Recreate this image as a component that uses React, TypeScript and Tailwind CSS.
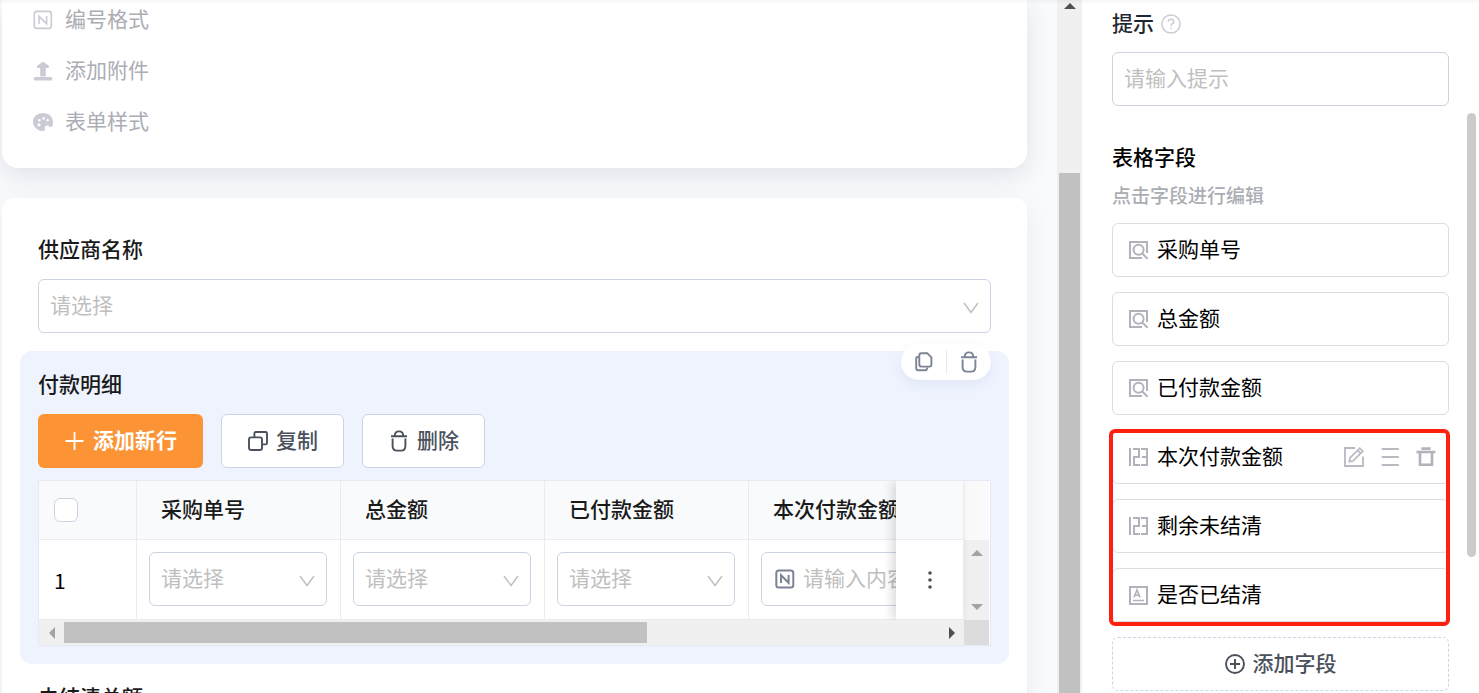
import type { ReactNode } from "react";
import clsx from "clsx";

type FieldKind = "relation" | "number" | "text";

type TableField = {
  name: string;
  kind: FieldKind;
  active?: boolean;
};

const linkedFields: TableField[] = [
  { name: "采购单号", kind: "relation" },
  { name: "总金额", kind: "relation" },
  { name: "已付款金额", kind: "relation" },
];

const highlightedFields: TableField[] = [
  { name: "本次付款金额", kind: "number", active: true },
  { name: "剩余未结清", kind: "number" },
  { name: "是否已结清", kind: "text" },
];

interface IconProps {
  className?: string;
}

/* --- Icons --- */

const NumberBoxIcon = ({ className }: IconProps) => (
  <svg viewBox="0 0 20 20" fill="none" stroke="currentColor" strokeWidth="1.6" className={clsx("size-5 shrink-0", className)}>
    <rect x="1.3" y="1.4" width="17" height="17" rx="2.5" />
    <path d="M6 14V6.2L13.6 13.8V6" />
  </svg>
);

const UploadIcon = () => (
  <svg viewBox="0 0 20 20" fill="currentColor" className="size-5 shrink-0">
    <path d="M9.4 .9Q10 .5 10.6 .9L15.8 4.8Q16.6 5.6 15.8 6.6 15.4 7 14.8 7H12.8V14.4Q12.8 15.4 11.8 15.4H8.2Q7.2 15.4 7.2 14.4V7H5.2Q4.6 7 4.2 6.6 3.4 5.6 4.2 4.8Z" />
    <rect x=".6" y="16" width="18.8" height="3.6" rx="1.6" />
  </svg>
);

const PaletteIcon = () => (
  <svg viewBox="0 0 20 20" fill="currentColor" fillRule="evenodd" className="size-5 shrink-0">
    <path d="M10 1C4.4 1 0 4.8 0 9.8S4.4 19 9.6 19C11.4 19 12.2 17.8 11.9 16.4 11.5 14.6 12.6 13.4 14.2 13.5 16.4 13.8 16.7 15.2 18.2 15.1 19.4 15 20 12.4 20 10.2 20 4.8 15.6 1 10 1ZM5.1 8.2A1.3 1.3 0 1 0 7.7 8.2 1.3 1.3 0 1 0 5.1 8.2ZM9.3 6.4A1.3 1.3 0 1 0 11.9 6.4 1.3 1.3 0 1 0 9.3 6.4ZM13.3 8.2A1.3 1.3 0 1 0 15.9 8.2 1.3 1.3 0 1 0 13.3 8.2ZM4.4 12.8A1.6 1.6 0 1 0 7.6 12.8 1.6 1.6 0 1 0 4.4 12.8Z" />
  </svg>
);

const ChevronIcon = ({ className }: IconProps) => (
  <svg viewBox="0 0 16 12" fill="none" stroke="currentColor" strokeWidth="1.4" className={clsx("h-3 w-4", className)}>
    <path d="M1 1 8 10.5 15 1" />
  </svg>
);

const PlusIcon = () => (
  <svg viewBox="0 0 20 20" fill="none" stroke="currentColor" strokeWidth="1.8" className="size-5">
    <path d="M10.5 1V19M1.5 10H19.5" />
  </svg>
);

const CopyIcon = () => (
  <svg viewBox="0 0 20 20" fill="none" stroke="currentColor" strokeWidth="1.9" className="size-5">
    <rect x="1" y="6.4" width="13" height="12.6" rx="2" />
    <path d="M6.4 6V2.5Q6.4 1 7.9 1H17.4Q19 1 19 2.5V12Q19 13.4 17.5 13.4H14.4" />
  </svg>
);

const PagesIcon = () => (
  <svg viewBox="0 0 20 20" fill="none" stroke="currentColor" strokeWidth="1.9" className="size-5">
    <path d="M7.3 1.2H13.2L17.4 5.4V12.6Q17.4 14.6 15.4 14.6H7.3Q5.3 14.6 5.3 12.6V3.2Q5.3 1.2 7.3 1.2Z" />
    <path d="M4.6 5H3.6Q2.2 5 2.2 6.4V16.3Q2.2 18.3 4.2 18.3H11.5Q13 18.3 13.5 15.4" />
  </svg>
);

const BinIcon = ({ className }: IconProps) => (
  <svg viewBox="0 0 20 22" fill="none" stroke="currentColor" strokeWidth="1.9" className={clsx("h-[22px] w-5", className)}>
    <path d="M2 6.2H18M5.8 5.6Q6 1.4 10 1.4T14.2 5.6M3.6 8.4V16Q3.6 20.6 8 20.6H12Q16.4 20.6 16.4 16V8.4" />
  </svg>
);

const HelpIcon = () => (
  <svg viewBox="0 0 20 20" fill="none" stroke="currentColor" strokeWidth="1.5" className="size-5">
    <circle cx="10" cy="10" r="9.1" />
    <path d="M7.2 7.8Q7.2 5.2 10 5.2T12.8 7.8Q12.8 9.2 11.2 9.8 10 10.3 10 12M10 13.4V15" />
  </svg>
);

const FieldIcon = ({ kind }: { kind: FieldKind }) => (
  <svg viewBox="0 0 20 20" fill="none" stroke="currentColor" strokeWidth="2" className="size-5 shrink-0 text-[#b2b2bd]">
    {kind === "relation" && (
      <>
        <path d="M13 18H1V2H18V13" />
        <circle cx="9.6" cy="9.8" r="5" />
        <path d="M12.8 13 18.6 18.8" />
      </>
    )}
    {kind === "number" && (
      <path d="M1 1V19M4 2H10V10H5V18H11M12 2H18V18H12M13 10H18" />
    )}
    {kind === "text" && (
      <>
        <rect x="1" y="2" width="17" height="17" strokeWidth="2" />
        <path d="M5 12.4 8 5 11 12.4M6 10.2H10M4 15.5H15" strokeWidth="1.6" />
      </>
    )}
  </svg>
);

const EditIcon = () => (
  <svg viewBox="0 0 20 20" fill="none" stroke="currentColor" strokeWidth="1.8" className="size-5">
    <path d="M11 1H1V19H19V9.6" />
    <path d="M5.4 14.6 6 11 15.8 1.2 18.8 4.2 9 14ZM13.6 3.4 16.6 6.4" strokeWidth="1.7" />
  </svg>
);

const MenuIcon = () => (
  <svg viewBox="0 0 20 20" fill="none" stroke="currentColor" strokeWidth="2.2" strokeLinecap="round" className="size-5">
    <path d="M2.5 2H18M2.5 10H18M2.5 18H18" />
  </svg>
);

const TrashIcon = () => (
  <svg viewBox="0 0 20 20" fill="none" stroke="currentColor" strokeWidth="2.6" className="size-5">
    <path d="M.5 5H19.5M5.4 1.6H14.6M4 5V17.8H16V5" />
  </svg>
);

const CirclePlusIcon = () => (
  <svg viewBox="0 0 20 20" fill="none" stroke="currentColor" strokeWidth="1.9" className="size-5">
    <circle cx="10" cy="10" r="9" />
    <path d="M10 5V15M5 10H15" />
  </svg>
);

/* --- Form parts --- */

const SelectBox = ({ id, label }: { id: string; label?: string }) => (
  <div className="relative">
    <select
      id={id}
      aria-label={label}
      defaultValue=""
      className="block h-[54px] w-full appearance-none rounded-md border border-[#ccd3e2] bg-white pr-10 pl-[11px] text-[#bfbfbf]"
    >
      <option value="">请选择</option>
    </select>
    <ChevronIcon className="pointer-events-none absolute top-[23px] right-3 text-[#bfbfbf]" />
  </div>
);

const ShortcutRow = ({ icon, children }: { icon: ReactNode; children: ReactNode }) => (
  <button type="button" className="flex h-[31px] items-center gap-3 text-[#aaadb3]">
    <span className="text-[#cbcbd6]">{icon}</span>
    {children}
  </button>
);

const FieldItem = ({ field }: { field: TableField }) => (
  <li className="flex h-[54px] items-center gap-2 rounded-md border border-[#dcdce4] bg-white pr-3 pl-4">
    <FieldIcon kind={field.kind} />
    <span className="flex-1 text-black">{field.name}</span>
    {field.active && (
      <span className="flex items-center gap-4 text-[#b9b9c4]">
        <button type="button" aria-label="编辑"><EditIcon /></button>
        <button type="button" aria-label="排序"><MenuIcon /></button>
        <button type="button" aria-label="删除字段" className="text-[#b2b2bd]"><TrashIcon /></button>
      </span>
    )}
  </li>
);

const DetailTable = () => {
  const selectColumns = linkedFields.map((field) => field.name);

  return (
    <div className="border border-[#e6e9f1] bg-white pr-px">
      <div className="flex overflow-hidden">
        <div className="min-w-0 flex-1 overflow-hidden">
          <table className="w-[914px] table-fixed border-separate border-spacing-0">
            <thead>
              <tr className="h-[59px] bg-[#f9fafc] text-left text-[#1a1a1a]">
                <th className="w-[98px] border-r border-b border-[#e9ebf1] pl-[15px]">
                  <input
                    type="checkbox"
                    aria-label="全选"
                    className="block size-6 appearance-none rounded-md border border-[#ccd3e2] bg-white"
                  />
                </th>
                {selectColumns.map((name) => (
                  <th key={name} className="w-[204px] border-r border-b border-[#e9ebf1] pl-6 font-medium">{name}</th>
                ))}
                <th className="w-[204px] border-b border-[#e9ebf1] pl-6 font-medium">本次付款金额</th>
              </tr>
            </thead>
            <tbody>
              <tr className="h-20 align-top">
                <td className="border-r border-b border-[#e9ebf1] pl-[15px] align-middle font-['Noto_Sans_CJK_SC',sans-serif] text-black">1</td>
                {selectColumns.map((name, i) => (
                  <td key={name} className="border-r border-b border-[#e9ebf1] pt-3 pr-[13px] pl-3">
                    <SelectBox id={`cell-${i}`} label={name} />
                  </td>
                ))}
                <td className="border-b border-[#e9ebf1] px-3 pt-3">
                  <label className="flex h-[54px] items-center gap-2 rounded-md border border-[#ccd3e2] pl-[13px] text-[#7b8494]">
                    <NumberBoxIcon className="stroke-2" />
                    <input
                      type="text"
                      aria-label="本次付款金额"
                      placeholder="请输入内容"
                      className="w-full min-w-0 placeholder:text-[#bfbfbf]"
                    />
                  </label>
                </td>
              </tr>
            </tbody>
          </table>
        </div>

        {/* Pinned action column */}
        <div className="z-10 w-[68px] shrink-0 border-r border-[#e9ebf1] bg-white shadow-[-4px_0_10px_rgba(0,0,0,0.14)]">
          <div className="h-[59px] border-b border-[#e9ebf1] bg-[#f9fafc]" />
          <div className="flex h-20 items-center justify-center border-b border-[#e9ebf1]">
            <button type="button" aria-label="更多" className="text-[#4a515c]">
              <svg viewBox="0 0 6 20" fill="currentColor" className="h-5 w-1.5">
                <circle cx="3" cy="3" r="1.8" />
                <circle cx="3" cy="10" r="1.8" />
                <circle cx="3" cy="17" r="1.8" />
              </svg>
            </button>
          </div>
        </div>

        <div className="flex w-[25px] shrink-0 flex-col">
          <div className="h-[59px] bg-[#fafafa]" />
          <div className="flex flex-1 flex-col items-center justify-between bg-[#f0f0f0] py-2.5 text-[#a3a3a3]">
            <svg viewBox="0 0 12 6" fill="currentColor" className="h-1.5 w-3"><path d="M0 6 6 0 12 6Z" /></svg>
            <svg viewBox="0 0 12 6" fill="currentColor" className="h-1.5 w-3"><path d="M0 0H12L6 6Z" /></svg>
          </div>
        </div>
      </div>

      {/* Horizontal scrollbar */}
      <div className="flex h-[25px] bg-[#f0f0f0]">
        <div className="flex w-[25px] items-center justify-center text-[#a3a3a3]">
          <svg viewBox="0 0 6 12" fill="currentColor" className="h-3 w-1.5"><path d="M6 0V12L0 6Z" /></svg>
        </div>
        <div className="flex flex-1 items-center">
          <div className="h-[21px] w-2/3 bg-[#c1c1c1]" />
        </div>
        <div className="flex w-[25px] items-center justify-center text-[#505050]">
          <svg viewBox="0 0 6 12" fill="currentColor" className="h-3 w-1.5"><path d="M0 0V12L6 6Z" /></svg>
        </div>
        <div className="w-[25px] bg-[#dcdcdc]" />
      </div>
    </div>
  );
};

const App = () => {
  const outlineButton =
    "flex h-[54px] items-center gap-2 rounded-md border border-[#ccd3e2] bg-white pr-[25px] pl-[26px] font-medium text-[#4a515c]";

  return (
    <div className="relative flex h-screen overflow-hidden bg-white font-['Liberation_Sans','Noto_Sans_CJK_SC',sans-serif] text-[21px] leading-8">
      <main className="min-w-0 flex-1 overflow-hidden bg-[#f9fafc] pr-[30px] pl-0.5">
        <section className="flex flex-col items-start gap-5 rounded-b-2xl bg-white px-[31px] pt-1 pb-[31px] shadow-[0_8px_24px_rgba(60,60,110,0.12)]">
          <ShortcutRow icon={<NumberBoxIcon />}>编号格式</ShortcutRow>
          <ShortcutRow icon={<UploadIcon />}>添加附件</ShortcutRow>
          <ShortcutRow icon={<PaletteIcon />}>表单样式</ShortcutRow>
        </section>

        <section className="mt-[30px] rounded-xl bg-white p-[18px] text-[#1a1a1a] shadow-[0_8px_24px_rgba(60,60,110,0.08)]">
          <div className="p-[18px]">
            <label htmlFor="supplier" className="mb-[13px] block font-medium">供应商名称</label>
            <SelectBox id="supplier" />
          </div>

          <div className="relative rounded-xl bg-[#eef3fe] p-[18px]">
            {/* Floating block actions */}
            <div className="absolute -top-[7px] right-[18px] flex h-9 w-[90px] items-center justify-center gap-3 rounded-full bg-white text-[#7b8494] shadow-[0_4px_12px_rgba(60,80,150,0.08)]">
              <button type="button" aria-label="复制字段"><PagesIcon /></button>
              <span className="h-6 w-px bg-[#e6e9f1]" />
              <button type="button" aria-label="删除字段"><BinIcon /></button>
            </div>

            <h2 className="mb-[13px] font-medium">付款明细</h2>
            <div className="mb-3 flex gap-[18px]">
              <button type="button" className="flex h-[54px] items-center gap-[9px] rounded-md bg-[#fc9436] px-[26px] font-bold text-white">
                <PlusIcon />
                添加新行
              </button>
              <button type="button" className={outlineButton}>
                <CopyIcon />
                复制
              </button>
              <button type="button" className={outlineButton}>
                <BinIcon />
                删除
              </button>
            </div>
            <DetailTable />
          </div>

          <div className="p-[18px]">
            <label htmlFor="unsettled" className="mb-[13px] block font-medium">未结清总额</label>
            <SelectBox id="unsettled" />
          </div>
        </section>
      </main>

      {/* Page scrollbar */}
      <div className="flex w-[25px] shrink-0 flex-col items-center bg-[#f0f0f0] text-[#505050]">
        <svg viewBox="0 0 12 6" fill="currentColor" className="mt-[3px] h-1.5 w-3 shrink-0"><path d="M0 6 6 0 12 6Z" /></svg>
        <div className="mt-[164px] w-[21px] flex-1 bg-[#c1c1c1]" />
      </div>

      <aside className="flex w-[397px] shrink-0 bg-white pr-[3px] pl-[30px]">
        <div className="min-w-0 flex-1 pt-2">
          <div className="mb-3 flex items-center gap-[7px]">
            <label htmlFor="hint" className="font-medium text-[#1f2933]">提示</label>
            <span className="text-[#cbcbd6]"><HelpIcon /></span>
          </div>
          <input
            id="hint"
            type="text"
            placeholder="请输入提示"
            className="block h-[54px] w-full rounded-md border border-[#ccd3e2] px-[11px] placeholder:text-[#bfbfbf]"
          />

          <h2 className="mt-9 font-medium text-black">表格字段</h2>
          <p className="mt-[7px] mb-2.5 text-[19px] leading-8 font-medium text-[#aaadb3]">点击字段进行编辑</p>

          <ul className="flex flex-col gap-[15px]">
            {linkedFields.map((field) => <FieldItem key={field.name} field={field} />)}
          </ul>
          <div className="relative my-[15px]">
            <ul className="flex flex-col gap-[15px]">
              {highlightedFields.map((field) => <FieldItem key={field.name} field={field} />)}
            </ul>
            <div className="pointer-events-none absolute -top-px -right-px -bottom-1 -left-[3px] rounded-md border-4 border-[#ff2010]" />
          </div>

          <button
            type="button"
            className="flex h-[54px] w-full items-center justify-center gap-2 rounded-md border border-dashed border-[#ccd3e2] font-medium text-[#4a515c]"
          >
            <CirclePlusIcon />
            添加字段
          </button>
        </div>

        <div className="mt-[113px] ml-[18px] h-[444px] w-[9px] shrink-0 rounded-full bg-[#cbcbcb]" />
      </aside>

      {/* Shade cast by the top bar */}
      <div className="pointer-events-none absolute inset-x-0 top-0 h-1 bg-linear-to-b from-black/4 to-transparent" />
    </div>
  );
};

export default App;
